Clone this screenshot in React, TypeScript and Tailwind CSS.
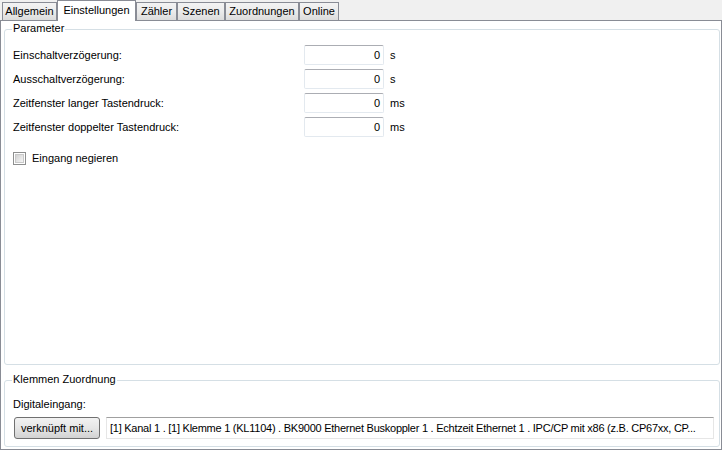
import { ReactNode } from "react";

const tabs = ["Allgemein", "Einstellungen", "Zähler", "Szenen", "Zuordnungen", "Online"];
const tabWidths: Record<string, string> = {
    Allgemein: "w-[55px]",
    Einstellungen: "w-[79px]",
    Zähler: "w-[41px]",
    Szenen: "w-[48px]",
    Zuordnungen: "w-[74px]",
    Online: "w-[40px]",
};

const params = [
    { label: "Einschaltverzögerung:", value: "0", unit: "s" },
    { label: "Ausschaltverzögerung:", value: "0", unit: "s" },
    { label: "Zeitfenster langer Tastendruck:", value: "0", unit: "ms" },
    { label: "Zeitfenster doppelter Tastendruck:", value: "0", unit: "ms" },
];

function Group({ title, className, children }: { title: string; className?: string; children: ReactNode }) {
    return (
        <div className={`relative border border-[#d5dfe5] rounded-[3px] ${className ?? ""}`}>
            <span className="absolute top-[-8px] left-[7px] bg-white px-[1px] leading-[13px]">{title}</span>
            {children}
        </div>
    );
}

export default function App() {
    return (
        <div className="w-[722px] h-[450px] bg-[#f0f0f0] flex flex-col font-['Liberation_Sans',Arial,sans-serif] text-[11px] text-black">
            {/* tab strip */}
            <div className="h-[20px] flex items-end pl-[2px] relative z-10">
                {tabs.map(t =>
                    t === "Einstellungen" ? (
                        <div key={t} className={`${tabWidths[t]} h-[21px] -mb-px bg-white border border-b-0 border-[#898c95] flex items-start justify-center pt-[3px] leading-[13px]`}>
                            {t}
                        </div>
                    ) : (
                        <div key={t} className={`${tabWidths[t]} h-[18px] bg-gradient-to-b from-[#f3f3f3] via-[#ebebeb] to-[#dcdcdc] border border-b-0 border-[#898c95] flex items-center justify-center leading-[13px]`}>
                            {t}
                        </div>
                    )
                )}
            </div>

            {/* tab page */}
            <div className="h-[430px] bg-white border border-[#898c95] flex flex-col pt-[8px] pl-[3px] pr-[1px] pb-[2px] gap-[15px]">
                <Group title="Parameter" className="flex-1">
                    <div className="pt-[15px] pl-[8px] flex flex-col">
                        <div className="grid grid-cols-[291px_80px_auto] gap-y-[4px]">
                            {params.map(p => (
                                <div key={p.label} className="contents">
                                    <div className="h-[20px] flex items-center">{p.label}</div>
                                    <div className="h-[20px] border border-[#e3e9ef] border-t-[#abadb3] rounded-[2px] flex items-center justify-end pr-[3px]">
                                        {p.value}
                                    </div>
                                    <div className="h-[20px] flex items-center pl-[6px]">{p.unit}</div>
                                </div>
                            ))}
                        </div>
                        <div className="mt-[15px] flex items-center gap-[6px] h-[13px]">
                            <div className="w-[13px] h-[13px] border border-[#8e8f8f] bg-white p-[1px]">
                                <div className="w-full h-full border border-[#c9c9c9] bg-gradient-to-br from-[#d2d2d2] to-[#f5f5f5]" />
                            </div>
                            <span className="leading-[13px]">Eingang negieren</span>
                        </div>
                    </div>
                </Group>

                <Group title="Klemmen Zuordnung" className="h-[67px]">
                    <div className="pt-[17px] pl-[8px] pr-[5px] flex flex-col">
                        <div className="leading-[13px] h-[13px]">Digitaleingang:</div>
                        <div className="mt-[6px] flex items-center gap-[6px]">
                            <button className="ml-[1px] w-[86px] h-[22px] border border-[#707070] rounded-[3px] bg-gradient-to-b from-[#f2f2f2] via-[#e6e6e6] to-[#d2d2d2] flex items-center justify-center leading-[13px]">
                                verknüpft mit...
                            </button>
                            <div className="flex-1 min-w-0 h-[22px] border border-[#e6e6e6] border-t-[#a0a0a0] bg-white flex items-center pl-[3px] leading-[13px]">
                                <span className="block overflow-hidden whitespace-nowrap text-ellipsis tracking-[-0.25px]">
                                    [1] Kanal 1 . [1] Klemme 1 (KL1104) . BK9000 Ethernet Buskoppler 1 . Echtzeit Ethernet 1 . IPC/CP mit x86 (z.B. CP67xx, CP...
                                </span>
                            </div>
                        </div>
                    </div>
                </Group>
            </div>
        </div>
    );
}
